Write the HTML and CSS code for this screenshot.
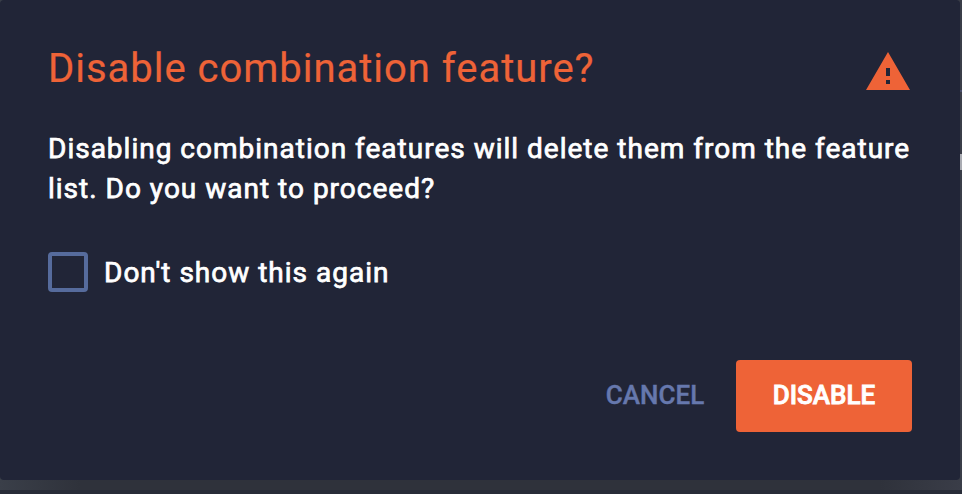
FILE: index.html
```html
<!DOCTYPE html>
<html lang="en">
<head>
<meta charset="utf-8">
<title>Disable combination feature?</title>
<link rel="stylesheet" href="styles.css">
</head>
<body>
<main class="dialog" role="dialog" aria-labelledby="dialog-title">
  <header class="dialog-header">
    <h1 class="dialog-title" id="dialog-title">Disable combination feature?</h1>
    <svg class="warning-icon" viewBox="0 0 44 38" aria-hidden="true">
      <path fill="currentColor" fill-rule="evenodd" d="M0 38h44L22 0zM20 16h4v8h-4zM20 28h4v4h-4z"/>
    </svg>
  </header>
  <p class="dialog-text">Disabling combination features will delete them from the feature list. Do you want to proceed?</p>
  <label class="option"><input class="checkbox" type="checkbox"><span class="option-label">Don't show this again</span></label>
  <footer class="actions">
    <button class="button cancel" type="button">CANCEL</button>
    <button class="button disable" type="button">DISABLE</button>
  </footer>
</main>
</body>
</html>
```
FILE: styles.css
```css
* { box-sizing: border-box; }

body {
  margin: 0;
  width: 962px;
  height: 494px;
  overflow: hidden;
  font-family: Roboto, sans-serif;
  background:
    linear-gradient(#494f6b, #494f6b) 960px 90px / 2px 2px no-repeat,
    linear-gradient(#a9abb2, #a9abb2) 960px 154px / 2px 16px no-repeat,
    linear-gradient(#282c38, #282c38) 0 490px / 962px 4px no-repeat,
    linear-gradient(90deg, #3a3f49, #2f323b 80px, #2f323b 880px, #3a3d48);
}

.dialog {
  display: flex;
  flex-direction: column;
  width: 960px;
  height: 480px;
  padding: 48px;
  border-radius: 4px;
  background: #212537;
  color: #fff;
}

.dialog-header {
  display: flex;
  justify-content: space-between;
  height: 48px;
  color: #ee6337;
}

.dialog-title {
  margin: -3px 0 0;
  font-size: 40px;
  font-weight: 400;
  line-height: 48px;
  letter-spacing: 0.98px;
  -webkit-text-stroke: 0.2px currentColor;
}

.warning-icon {
  width: 44px;
  height: 38px;
  margin: 4px 2px 0 0;
}

.dialog-text {
  margin: 33px 0 0;
  font-size: 28px;
  font-weight: 400;
  line-height: 40px;
  letter-spacing: 1px;
  -webkit-text-stroke: 0.75px currentColor;
}

.option {
  display: flex;
  align-items: center;
  gap: 16px;
  height: 40px;
  margin-top: 43px;
  font-size: 28px;
  font-weight: 400;
  line-height: 40px;
  letter-spacing: 1px;
  -webkit-text-stroke: 0.75px currentColor;
}

.option-label { padding-top: 2px; }

.checkbox {
  appearance: none;
  width: 40px;
  height: 40px;
  margin: 0;
  border: 4px solid #566b9c;
  border-radius: 4px;
}

.actions {
  display: flex;
  justify-content: flex-end;
  gap: 16px;
  margin-top: auto;
}

.button {
  height: 72px;
  padding: 0 0 2px;
  border: 0;
  border-radius: 4px;
  font-family: inherit;
  font-size: 26px;
  font-weight: 500;
}

.cancel {
  width: 130px;
  background: none;
  color: #6678ad;
  -webkit-text-stroke: 0.4px currentColor;
}

.disable {
  width: 176px;
  background: #ee6337;
  color: #fff;
  -webkit-text-stroke: 0.8px currentColor;
}
```
